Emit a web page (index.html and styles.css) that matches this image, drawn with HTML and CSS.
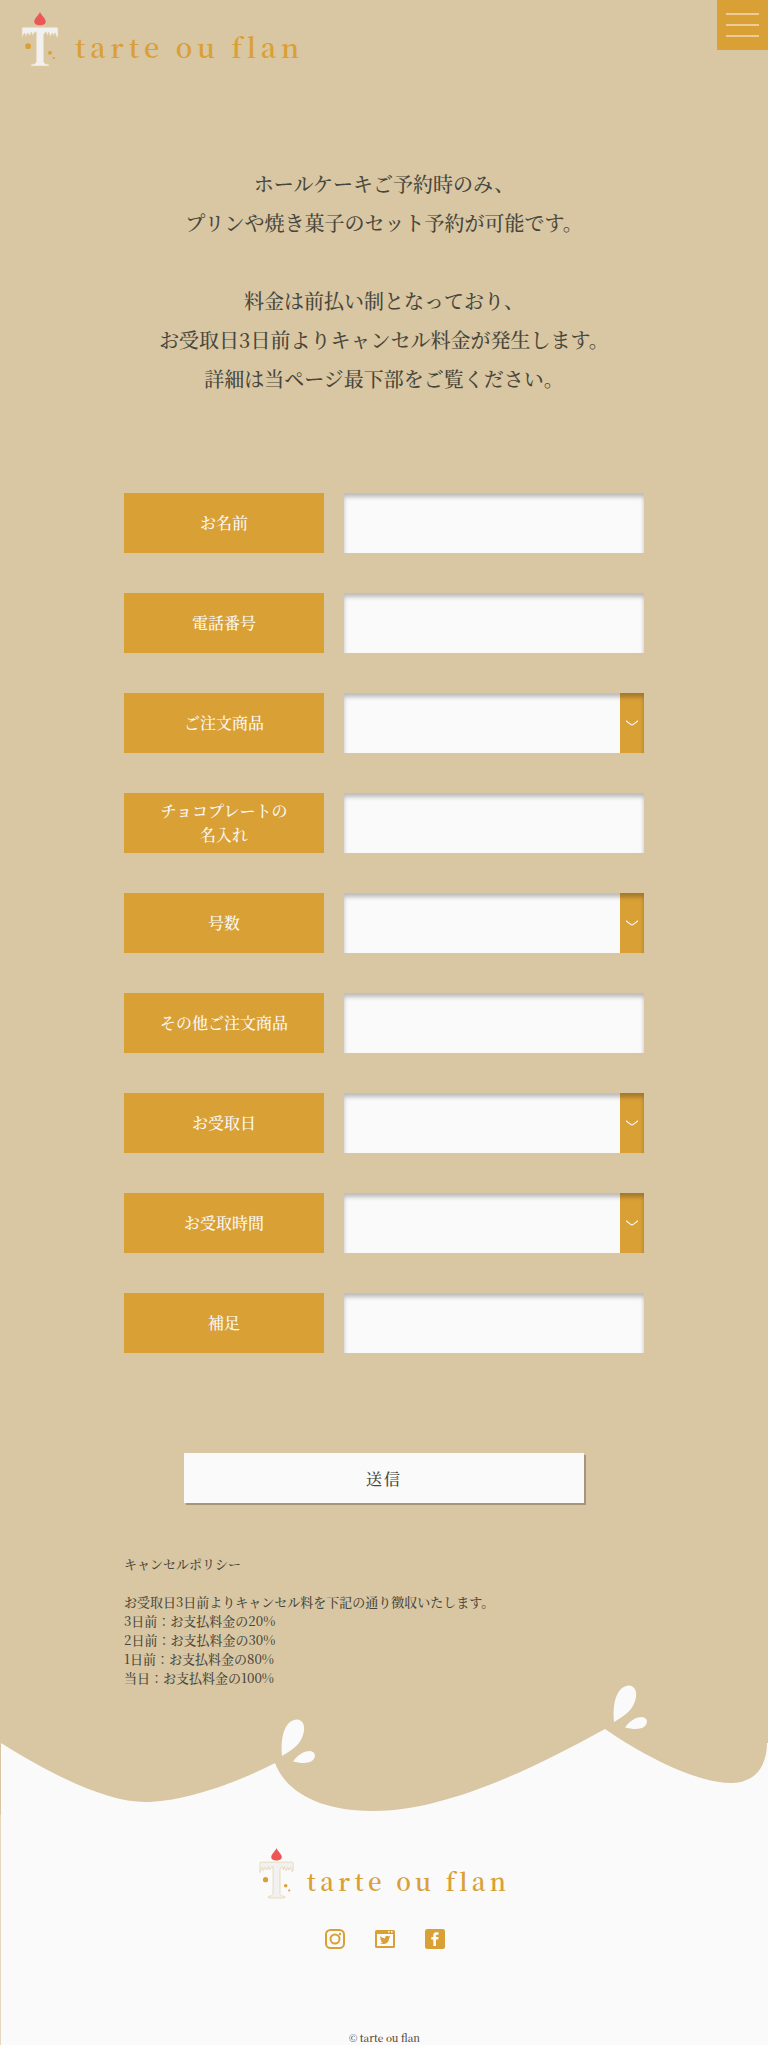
FILE: index.html
```html
<!DOCTYPE html>
<html lang="ja">
<head>
<meta charset="utf-8">
<meta name="viewport" content="width=device-width, initial-scale=1">
<title>tarte ou flan</title>
<link rel="stylesheet" href="styles.css">
</head>
<body>
<svg class="defs" aria-hidden="true">
  <symbol id="candle" viewBox="0 0 40 58">
    <path d="M20 0C22 4 26 7 26 10C26 13 23 14 20 14C17 14 14 13 14 10C14 7 18 4 20 0Z" fill="#eb5757"/>
    <path d="M1 17Q1 16 2 16H38Q39 16 39 17V25Q38 29 37 25L36 22L34 25L33 22L31 26L29 21L28 25L26 21L24 24V52Q24 55 29 55Q31 57 28 57H12Q9 57 11 55Q16 55 16 52V21L14 22L12 25L11 21L9 25L7 22L5 26L4 22L2 25L1 28Z" fill="#f1f1f1" stroke="#e5cb9b" stroke-width=".7"/>
    <circle cx="7.500" cy="36" r="3" fill="#d9a036"/>
    <circle cx="30.500" cy="43" r="2" fill="#d9a036"/>
    <circle cx="34.500" cy="48.500" r="1.200" fill="#d9a036"/>
  </symbol>
  <symbol id="chevron" viewBox="0 0 12 6">
    <path d="M0 .8L5 4.600Q6 5.200 7 4.600L12 .8" fill="none" stroke="#fafafa" stroke-width="1.100"/>
  </symbol>
</svg>

<header class="header">
  <a class="logo" href="#">
    <svg class="logo-mark" aria-hidden="true"><use href="#candle"/></svg>
    <span class="logo-text">tarte ou flan</span>
  </a>
  <button class="menu" type="button" aria-label="メニュー"><span></span><span></span><span></span></button>
</header>

<main class="main">
  <div class="intro">
    <p>ホールケーキご予約時のみ、<br>プリンや焼き菓子のセット予約が可能です。</p>
    <p>料金は前払い制となっており、<br>お受取日3日前よりキャンセル料金が発生します。<br>詳細は当ページ最下部をご覧ください。</p>
  </div>

  <form class="form">
    <div class="row"><label for="name">お名前</label><input class="field" id="name" type="text"></div>
    <div class="row"><label for="tel">電話番号</label><input class="field" id="tel" type="tel"></div>
    <div class="row"><label for="item">ご注文商品</label><div class="select"><select class="field" id="item"><option></option></select><svg aria-hidden="true"><use href="#chevron"/></svg></div></div>
    <div class="row"><label for="plate">チョコプレートの<br>名入れ</label><input class="field" id="plate" type="text"></div>
    <div class="row"><label for="size">号数</label><div class="select"><select class="field" id="size"><option></option></select><svg aria-hidden="true"><use href="#chevron"/></svg></div></div>
    <div class="row"><label for="other">その他ご注文商品</label><input class="field" id="other" type="text"></div>
    <div class="row"><label for="date">お受取日</label><div class="select"><select class="field" id="date"><option></option></select><svg aria-hidden="true"><use href="#chevron"/></svg></div></div>
    <div class="row"><label for="time">お受取時間</label><div class="select"><select class="field" id="time"><option></option></select><svg aria-hidden="true"><use href="#chevron"/></svg></div></div>
    <div class="row"><label for="note">補足</label><input class="field" id="note" type="text"></div>
    <button class="submit" type="submit">送信</button>
  </form>

  <section class="policy">
    <p>キャンセルポリシー</p>
    <p>お受取日3日前よりキャンセル料を下記の通り徴収いたします。<br>3日前：お支払料金の20%<br>2日前：お支払料金の30%<br>1日前：お支払料金の80%<br>当日：お支払料金の100%</p>
  </section>
</main>

<svg class="wave" viewBox="0 0 768 125" aria-hidden="true">
  <g fill="#fafafa">
    <path d="M1 53C60 90 110 112 145 112C180 112 230 96 275 73C283 95 310 121 373 121C440 121 520 86 605 39C650 70 700 93 731 93C756 93 767 75 767 53H768V126H1Z"/>
    <path id="splash" d="M282 66C280 42 287 30 297 29.500C302 30 305 34 304 41C302 52 296 58 282 66ZM293 71.500C298 64 305 61 310 61C316 62 316 67 313 70C309 74 301 73.500 293 71.500Z"/>
    <use href="#splash" x="332" y="-34"/>
  </g>
</svg>

<footer class="footer">
  <a class="logo logo-small" href="#">
    <svg class="logo-mark" aria-hidden="true"><use href="#candle"/></svg>
    <span class="logo-text">tarte ou flan</span>
  </a>
  <nav class="social">
    <a href="#" aria-label="Instagram"><svg viewBox="0 0 20 20" fill="none" stroke="#d9a036" stroke-width="2"><rect x="1" y="1" width="18" height="18" rx="4.500"/><circle cx="10" cy="10" r="4.500"/><circle cx="15" cy="5" r="1.200" fill="#d9a036" stroke="none"/></svg></a>
    <a href="#" aria-label="Twitter"><svg viewBox="0 0 20 20"><path fill="#d9a036" fill-rule="evenodd" d="M1.500 1H18.500Q20 1 20 2.500V17.500Q20 19 18.500 19H1.500Q0 19 0 17.500V2.500Q0 1 1.500 1ZM2 5V17H18V5ZM13 2V3.500H14.500V2ZM16 2V3.500H17.500V2Z"/><path fill="#d9a036" d="M5.300 7.200Q7.500 9.300 10 9.400Q9.800 6.800 12 6.700Q13 6.700 13.600 7.300L15 6.800L14.400 7.900L15.300 7.800L14.200 8.900Q14 13.900 9.400 14.900Q7 15.200 5 14Q7 14 8 13.200Q6.400 13 6 11.900H6.800Q5.200 11.200 5.200 9.800L6 10Q4.700 8.800 5.300 7.200Z"/></svg></a>
    <a href="#" aria-label="Facebook"><svg viewBox="0 0 20 20"><rect width="20" height="20" rx="2.500" fill="#d9a036"/><path fill="#fafafa" d="M8.300 17V10.500H6.300V8H8.300V6.300Q8.300 3.300 11.300 3.300H13.500V5.800H12Q11 5.800 11 6.800V8H13.500L13.200 10.500H11V17Z"/></svg></a>
  </nav>
  <small class="copyright">© tarte ou flan</small>
</footer>
</body>
</html>
```
FILE: styles.css
```css
* {
  box-sizing: border-box;
}

body {
  margin: 0;
  background: #d9c7a3;
  color: #48463b;
  font-family: "Noto Serif CJK JP", "Noto Serif JP", "Liberation Serif", "Noto Sans CJK JP", serif;
  font-weight: 500;
}

p {
  margin: 0;
}

.defs {
  display: none;
}

.header {
  display: flex;
  justify-content: space-between;
  align-items: flex-start;
}

.logo {
  display: flex;
  align-items: center;
  gap: 16px;
  padding: 11px 0 0 21px;
  color: #d9a036;
  font-size: 27px;
  font-weight: 600;
  line-height: 36px;
  text-decoration: none;
}

.logo-mark {
  width: 38px;
  height: 57px;
}

.logo-text {
  padding-top: 15px;
  letter-spacing: 0.18em;
}

.menu {
  display: flex;
  flex-direction: column;
  align-items: center;
  justify-content: center;
  gap: 9px;
  width: 51px;
  height: 50px;
  padding: 0;
  border: 0;
  background: #d9a036;
}

.menu span {
  width: 33px;
  height: 2px;
  background: #ebcc98;
}

.main {
  padding: 96px 20px 3px;
}

.intro {
  display: grid;
  gap: 39px;
  font-size: 20px;
  line-height: 39px;
  text-align: center;
}

.form {
  display: grid;
  gap: 40px;
  max-width: 520px;
  margin: 95px auto 0;
}

.row {
  display: grid;
  grid-template-columns: 2fr 3fr;
  gap: 20px;
  min-height: 60px;
}

.row label {
  display: flex;
  align-items: center;
  justify-content: center;
  background: #d9a036;
  color: #fafafa;
  font-size: 16px;
  line-height: 24px;
  text-align: center;
}

.field {
  width: 100%;
  height: 60px;
  padding: 0 12px;
  border: 0;
  border-radius: 0;
  background: #fafafa;
  box-shadow: inset 0 4px 4px rgba(0, 0, 0, 0.25);
  color: inherit;
  font: inherit;
  appearance: none;
}

.select {
  position: relative;
}

select.field {
  background: linear-gradient(#d9a036, #d9a036) right / 24px 100% no-repeat #fafafa;
}

.select svg {
  position: absolute;
  top: 27px;
  right: 6px;
  width: 12px;
  height: 6px;
  pointer-events: none;
}

.submit {
  justify-self: center;
  width: 100%;
  max-width: 400px;
  height: 50px;
  margin-top: 60px;
  border: 0;
  background: #fafafa;
  box-shadow: 2px 2px #a3967a;
  color: inherit;
  font-family: inherit;
  font-size: 16px;
  font-weight: 500;
  letter-spacing: 2px;
}

.policy {
  display: grid;
  gap: 19px;
  max-width: 520px;
  margin: 51px auto 0;
  font-size: 13px;
  line-height: 19px;
}

.wave {
  display: block;
  width: 100%;
  overflow: visible;
}

.footer {
  display: flex;
  flex-direction: column;
  align-items: center;
  padding: 33px 0 0;
  border-left: 1px solid #e6d8bd;
  background: #fafafa;
}

.logo-small {
  gap: 13px;
  padding: 0;
  font-size: 24px;
}

.logo-small .logo-mark {
  width: 35px;
  height: 51px;
}

.social {
  display: flex;
  gap: 30px;
  margin-top: 30px;
}

.social svg {
  display: block;
  width: 20px;
  height: 20px;
}

.copyright {
  margin-top: 81px;
  font-size: 10px;
  line-height: 15px;
}
```
